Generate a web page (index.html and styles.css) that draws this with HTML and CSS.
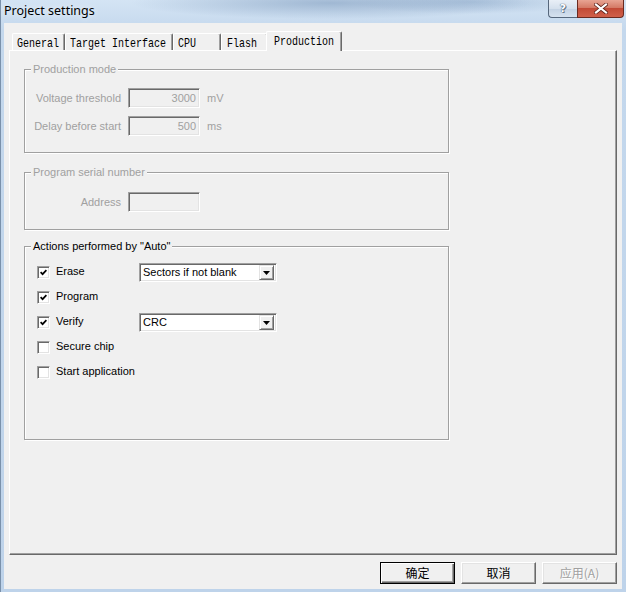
FILE: index.html
```html
<!DOCTYPE html>
<html>
<head>
<meta charset="utf-8">
<title>Project settings</title>
<link rel="stylesheet" href="styles.css">
</head>
<body>
<div class="window">
  <div class="titlebar">
    <span class="title">Project settings</span>
    <div class="caption-btns">
      <div class="cap help"><span>?</span></div>
      <div class="cap close">
        <svg width="14" height="11" viewBox="0 0 14 11"><path d="M2 1.5 L12 9.5 M12 1.5 L2 9.5" stroke="#5a1e16" stroke-width="3.6" stroke-linecap="square"/><path d="M2 1.5 L12 9.5 M12 1.5 L2 9.5" stroke="#ffffff" stroke-width="2.2" stroke-linecap="square"/></svg>
      </div>
    </div>
  </div>
  <div class="client">
    <div class="tabs">
      <div class="tab t1"><span class="tab-text">General</span></div>
      <div class="tab t2"><span class="tab-text">Target Interface</span></div>
      <div class="tab t3"><span class="tab-text">CPU</span></div>
      <div class="tab t4"><span class="tab-text">Flash</span></div>
      <div class="tab t5 selected"><span class="tab-text">Production</span></div>
    </div>
    <div class="panel">
      <div class="group g-prod">
        <span class="group-title disabled">Production mode</span>
        <div class="field-rows">
          <div class="field-row">
            <span class="field-label disabled">Voltage threshold</span>
            <span class="edit disabled">3000</span>
            <span class="unit disabled">mV</span>
          </div>
          <div class="field-row">
            <span class="field-label disabled">Delay before start</span>
            <span class="edit disabled">500</span>
            <span class="unit disabled">ms</span>
          </div>
        </div>
      </div>
      <div class="group g-serial">
        <span class="group-title disabled">Program serial number</span>
        <div class="field-rows">
          <div class="field-row">
            <span class="field-label disabled">Address</span>
            <span class="edit disabled"></span>
          </div>
        </div>
      </div>
      <div class="group g-actions">
        <span class="group-title">Actions performed by "Auto"</span>
        <div class="action-row">
          <span class="check"><span class="box checked"><svg width="7" height="7" viewBox="0 0 7 7"><path d="M0.6 3.2 L2.6 5.2 L6.4 1.2" fill="none" stroke="#000" stroke-width="1.7"/></svg></span><span class="check-label">Erase</span></span>
          <span class="combo"><span class="combo-text">Sectors if not blank</span><span class="combo-btn"><svg width="7" height="4" viewBox="0 0 7 4"><path d="M0 0 H7 L3.5 4 Z" fill="#000"/></svg></span></span>
        </div>
        <div class="action-row">
          <span class="check"><span class="box checked"><svg width="7" height="7" viewBox="0 0 7 7"><path d="M0.6 3.2 L2.6 5.2 L6.4 1.2" fill="none" stroke="#000" stroke-width="1.7"/></svg></span><span class="check-label">Program</span></span>
        </div>
        <div class="action-row">
          <span class="check"><span class="box checked"><svg width="7" height="7" viewBox="0 0 7 7"><path d="M0.6 3.2 L2.6 5.2 L6.4 1.2" fill="none" stroke="#000" stroke-width="1.7"/></svg></span><span class="check-label">Verify</span></span>
          <span class="combo"><span class="combo-text">CRC</span><span class="combo-btn"><svg width="7" height="4" viewBox="0 0 7 4"><path d="M0 0 H7 L3.5 4 Z" fill="#000"/></svg></span></span>
        </div>
        <div class="action-row">
          <span class="check"><span class="box"></span><span class="check-label">Secure chip</span></span>
        </div>
        <div class="action-row">
          <span class="check"><span class="box"></span><span class="check-label">Start application</span></span>
        </div>
      </div>
    </div>
    <div class="buttons">
      <div class="btn default">确定</div>
      <div class="btn">取消</div>
      <div class="btn disabled-btn">应用(A)</div>
    </div>
  </div>
</div>
</body>
</html>
```
FILE: styles.css
```css
* { box-sizing: border-box; }
html, body { margin: 0; padding: 0; }
body {
  width: 626px;
  height: 592px;
  overflow: hidden;
  font-family: "Liberation Sans", Arial, sans-serif;
  font-size: 11px;
  color: #000;
  background: #bcd2ea;
}
.window {
  width: 626px;
  height: 592px;
  display: flex;
  flex-direction: column;
  padding: 0 4px 3px 3px;
  border-left: 1px solid #7a91ab;
  background:
    radial-gradient(ellipse 200px 16px at 330px 3px, rgba(118, 148, 184, 0.55), rgba(118, 148, 184, 0) 100%),
    radial-gradient(ellipse 120px 12px at 470px 2px, rgba(130, 160, 195, 0.45), rgba(130, 160, 195, 0) 100%),
    linear-gradient(180deg, #d4e4f4 0%, #c4d8ed 30px, #bed3ea 100%);
}
.titlebar {
  height: 23px;
  display: flex;
  align-items: flex-start;
  flex-shrink: 0;
}
.title {
  font-family: "Noto Sans", "Liberation Sans", sans-serif;
  font-size: 12.5px;
  line-height: 17px;
  padding-top: 2px;
  color: #000;
  text-shadow: 0 0 6px rgba(255, 255, 255, 0.9);
}
.caption-btns {
  margin-left: auto;
  margin-right: -2px;
  display: flex;
}
.cap {
  height: 18px;
  display: flex;
  align-items: center;
  justify-content: center;
  border: 1px solid #56677c;
  border-top: none;
}
.help {
  width: 29px;
  border-radius: 0 0 0 4px;
  background: linear-gradient(180deg, #e9eff7 0%, #d5e0ed 50%, #c2d1e3 51%, #d6e2ef 100%);
  border-right: none;
}
.help span {
  font-family: "DejaVu Sans", sans-serif;
  font-weight: bold;
  font-size: 11px;
  color: #fff;
  text-shadow: 0 0 1px #4a5a70, 0 0 1px #4a5a70, 1px 1px 0 #6d7e94;
}
.close {
  width: 47px;
  border-radius: 0 0 4px 0;
  background: linear-gradient(180deg, #e8a493 0%, #d47a66 45%, #c24a36 50%, #d0604a 100%);
  border-color: #6b2a20;
}
.close svg { display: block; }
.client {
  height: 566px;
  flex-shrink: 0;
  background: #f0f0f0;
  display: flex;
  flex-direction: column;
}
.tabs {
  height: 27px;
  display: flex;
  align-items: flex-end;
  padding-left: 8px;
  flex-shrink: 0;
}
.tab {
  height: 17px;
  border-top: 1px solid #ffffff;
  border-left: 1px solid #ffffff;
  border-right: 1px solid #696969;
  box-shadow: inset -1px 0 0 #a0a0a0;
  border-radius: 2px 2px 0 0;
  padding-left: 4px;
  line-height: 16px;
  background: #f0f0f0;
}
.tab-text {
  display: inline-block;
  font-family: "Liberation Mono", "Courier New", monospace;
  font-size: 10px;
  transform: scaleY(1.3);
  white-space: pre;
}
.t1 { width: 53px; }
.t2 { width: 108px; }
.t3 { width: 48px; }
.t4 { width: 47px; padding-left: 5px; }
.tab.selected {
  width: 76px;
  height: 20px;
  margin-left: -2px;
  margin-bottom: -1px;
  padding-left: 7px;
  position: relative;
  z-index: 1;
}
.panel {
  margin-left: 5px;
  width: 608px;
  height: 505px;
  flex-shrink: 0;
  border: 1px solid;
  border-color: #ffffff #696969 #696969 #ffffff;
  box-shadow: inset -1px -1px 0 #a0a0a0;
  padding: 18px 0 0 14px;
  display: flex;
  flex-direction: column;
}
.group {
  width: 425px;
  border: 1px solid #a0a0a0;
  box-shadow: 1px 1px 0 #ffffff, inset 1px 1px 0 #ffffff;
  position: relative;
  flex-shrink: 0;
}
.group-title {
  position: absolute;
  top: -7px;
  left: 6px;
  padding: 0 2px;
  background: #f0f0f0;
  line-height: 13px;
  white-space: nowrap;
}
.disabled { color: #a0a0a0; }
.g-prod { height: 84px; padding-top: 18px; }
.g-serial { height: 58px; margin-top: 19px; padding-top: 19px; }
.g-actions { height: 194px; margin-top: 16px; padding: 13px 0 0 12px; }
.field-rows {
  display: flex;
  flex-direction: column;
  gap: 8px;
}
.field-row {
  height: 20px;
  display: flex;
  align-items: center;
}
.field-label {
  width: 96px;
  text-align: right;
  margin-right: 7px;
  white-space: nowrap;
}
.edit {
  width: 72px;
  height: 20px;
  border: 1px solid;
  border-color: #a0a0a0 #ffffff #ffffff #a0a0a0;
  box-shadow: inset 1px 1px 0 #696969, inset -1px -1px 0 #e3e3e3;
  background: #f0f0f0;
  text-align: right;
  padding-right: 3px;
  line-height: 18px;
}
.unit { margin-left: 7px; }
.action-row {
  height: 25px;
  display: flex;
  align-items: center;
}
.check {
  width: 102px;
  display: flex;
  align-items: center;
  gap: 6px;
  white-space: nowrap;
}
.check-label {
  margin-bottom: 3px;
}
.box {
  width: 13px;
  height: 13px;
  flex-shrink: 0;
  border: 1px solid;
  border-color: #a0a0a0 #ffffff #ffffff #a0a0a0;
  box-shadow: inset 1px 1px 0 #696969, inset -1px -1px 0 #e3e3e3;
  background: #ffffff;
  display: flex;
  align-items: center;
  justify-content: center;
}
.box svg { display: block; }
.combo {
  width: 138px;
  height: 19px;
  border: 1px solid;
  border-color: #a0a0a0 #ffffff #ffffff #a0a0a0;
  box-shadow: inset 1px 1px 0 #696969, inset -1px -1px 0 #e3e3e3;
  background: #ffffff;
  display: flex;
  align-items: center;
  padding: 2px 2px 2px 3px;
}
.combo-text {
  flex: 1;
  line-height: 13px;
  white-space: nowrap;
}
.combo-btn {
  width: 15px;
  height: 15px;
  border: 1px solid;
  border-color: #e3e3e3 #696969 #696969 #e3e3e3;
  box-shadow: inset 1px 1px 0 #ffffff, inset -1px -1px 0 #a0a0a0;
  background: #f0f0f0;
  display: flex;
  align-items: center;
  justify-content: center;
}
.combo-btn svg { display: block; }
.buttons {
  display: flex;
  justify-content: flex-end;
  gap: 6px;
  padding-right: 5px;
  margin-top: 7px;
}
.btn {
  width: 75px;
  height: 22px;
  border: 1px solid;
  border-color: #ffffff #696969 #696969 #ffffff;
  box-shadow: inset -1px -1px 0 #a0a0a0, inset 1px 1px 0 #e3e3e3;
  background: #f0f0f0;
  font-family: "Noto Sans CJK SC", "Liberation Sans", sans-serif;
  font-size: 12px;
  line-height: 19px;
  text-align: center;
}
.btn.default {
  border: 1px solid #000000;
  box-shadow: inset 1px 1px 0 #ffffff, inset -1px -1px 0 #696969, inset -2px -2px 0 #a0a0a0;
}
.disabled-btn {
  color: #a0a0a0;
  text-shadow: 1px 1px 0 #ffffff;
}
```
